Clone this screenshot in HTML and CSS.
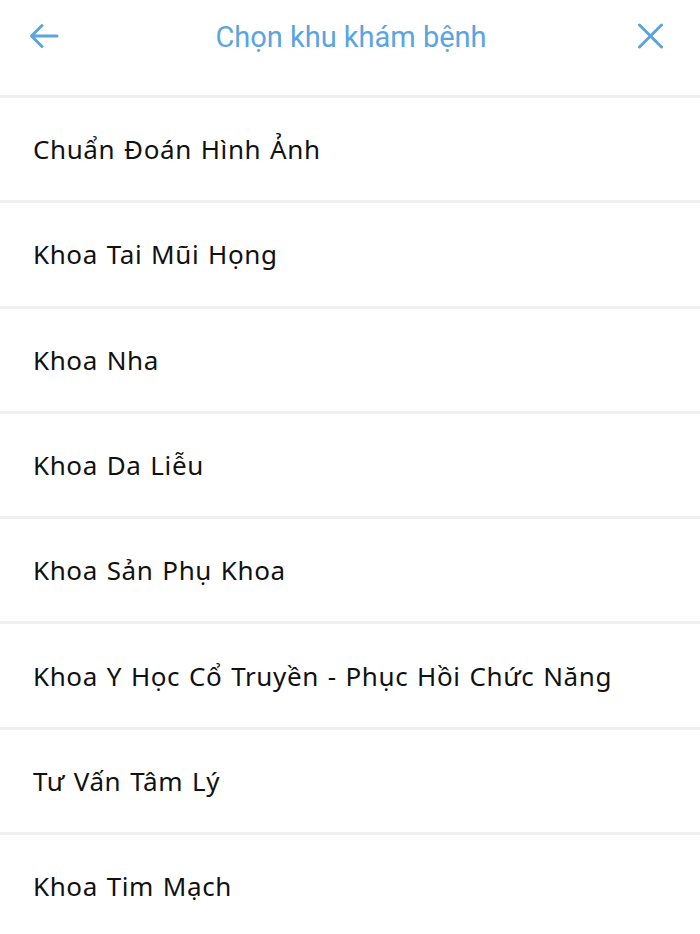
FILE: index.html
```html
<!DOCTYPE html>
<html lang="vi">

<head>
    <meta charset="UTF-8">
    <meta name="viewport" content="width=device-width, initial-scale=1.0">
    <title>Chọn khu khám bệnh</title>
    <link rel="stylesheet" href="styles.css">
</head>

<body>

    <div class="header">
        <button class="icon-btn back" aria-label="Back">
            <svg width="30" height="26" viewBox="0 0 30 26">
                <path d="M28 13H3M13 2.5L2.5 13 13 23.5" fill="none" stroke="currentColor" stroke-width="3" stroke-linecap="round" stroke-linejoin="round"/>
            </svg>
        </button>
        <h1 class="title">Chọn khu khám bệnh</h1>
        <button class="icon-btn close" aria-label="Close">
            <svg width="27" height="26" viewBox="0 0 27 26">
                <path d="M2.5 2l22 22M24.5 2l-22 22" fill="none" stroke="currentColor" stroke-width="3" stroke-linecap="round"/>
            </svg>
        </button>
    </div>

    <!-- Department list -->
    <ul class="dept-list">
        <li>Chuẩn Đoán Hình Ảnh</li>
        <li>Khoa Tai Mũi Họng</li>
        <li>Khoa Nha</li>
        <li>Khoa Da Liễu</li>
        <li>Khoa Sản Phụ Khoa</li>
        <li>Khoa Y Học Cổ Truyền - Phục Hồi Chức Năng</li>
        <li>Tư Vấn Tâm Lý</li>
        <li>Khoa Tim Mạch</li>
    </ul>

</body>
</html>
```

FILE: styles.css
```css
body {
    font-family: 'Noto Sans', 'Open Sans', sans-serif;
    margin: 0;
    padding: 0;
    background-color: #fff;
    color: #111;
}

.header {
    height: 95px;
    display: grid;
    grid-template-columns: 1fr auto 1fr;
    align-items: start;
    padding: 0 36px 0 29px;
    box-sizing: border-box;
}

.icon-btn {
    background: none;
    border: none;
    padding: 0;
    margin-top: 23px;
    color: #5ba4de;
    display: flex;
    cursor: pointer;
}

.close {
    justify-self: end;
}

.title {
    margin: 17px 0 0;
    padding-left: 9px;
    font-family: 'Roboto', sans-serif;
    font-weight: normal;
    font-size: 29px;
    line-height: 40px;
    color: #5ba4de;
}

.dept-list {
    list-style: none;
    margin: 0;
    padding: 0;
}

.dept-list li {
    height: 102.3px;
    border-top: 3px solid #efefef;
    padding-left: 33px;
    display: flex;
    align-items: center;
    font-size: 26px;
    letter-spacing: 0.6px;
    word-spacing: 1.5px;
}
```
